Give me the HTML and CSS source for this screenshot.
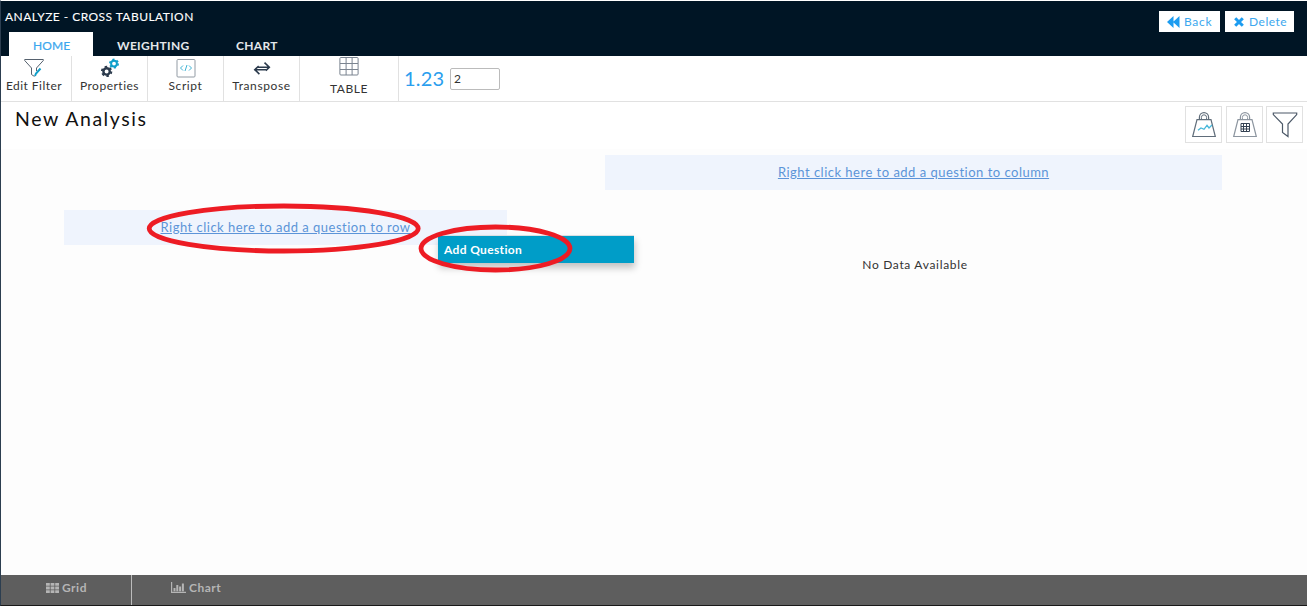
FILE: index.html
```html
<!DOCTYPE html>
<html lang="en">
<head>
<meta charset="utf-8">
<title>Analyze - Cross Tabulation</title>
<link rel="stylesheet" href="styles.css">
</head>
<body>
<div class="app">
  <header class="header">
    <div class="header-left">
      <div class="crumb"><span>ANALYZE - CROSS TABULATION</span></div>
      <nav class="tabs">
        <a class="tab active"><span>HOME</span></a>
        <a class="tab weighting"><span>WEIGHTING</span></a>
        <a class="tab chart"><span>CHART</span></a>
      </nav>
    </div>
    <div class="actions">
      <button class="btn back"><svg width="13" height="12" viewBox="0 0 13 12"><path fill="#1c9cf0" d="M6.5 0v12L0 6zM12.5 0v12L6 6z"/></svg><span>Back</span></button>
      <button class="btn delete"><svg width="10" height="10" viewBox="0 0 10 10"><path stroke="#1c9cf0" stroke-width="3" d="M1.2 1.2l7.6 7.6M8.8 1.2L1.2 8.8"/></svg><span>Delete</span></button>
    </div>
  </header>

  <div class="toolbar">
    <div class="tool filter">
      <svg width="20" height="20" viewBox="0 0 20 20" fill="none"><path stroke="#56616e" d="M.7 1.5h18.6v1L12.5 10v3M.7 1.5v1L7.5 10v6.5l3 2"/><path stroke="#109fca" stroke-width="2" d="M11 18l1-2.5 4.5-5"/></svg>
      <span>Edit Filter</span>
    </div>
    <div class="tool properties">
      <svg width="20" height="20" viewBox="0 0 20 20" fill="none"><circle cx="6.6" cy="13.4" r="3.2" stroke="#2b3a4c" stroke-width="2.4"/><circle cx="6.6" cy="13.4" r="4.8" stroke="#2b3a4c" stroke-width="1.8" stroke-dasharray="2.5 2.53"/><circle cx="14" cy="5.6" r="2.9" stroke="#109fca" stroke-width="2"/><circle cx="14" cy="5.6" r="4.2" stroke="#109fca" stroke-width="1.6" stroke-dasharray="2.2 2.2"/></svg>
      <span>Properties</span>
    </div>
    <div class="tool script">
      <svg width="20" height="20" viewBox="0 0 20 20" fill="none"><rect x="1" y="1.5" width="18" height="17.5" rx="1" stroke="#929ba4"/><path stroke="#3eb3d5" d="M7 7.5L4.5 10 7 12.5M13 7.5l2.5 2.5L13 12.5M11 7l-2 6"/></svg>
      <span>Script</span>
    </div>
    <div class="tool transpose">
      <svg width="20" height="20" viewBox="0 0 20 20" fill="none" stroke="#2b3a4c" stroke-width="1.6"><path d="M6 9.2h11.5M12.5 4.7L17.3 9.2 13.8 12.6M14 11.7H2.5M6.7 8.2L2.8 11.7 7.4 16.1"/></svg>
      <span>Transpose</span>
    </div>
    <div class="tool table">
      <svg width="20" height="20" viewBox="0 0 20 20" fill="none" stroke="#7b8490"><rect x=".9" y="1.5" width="18.2" height="17.5" rx="1"/><path d="M7.1 1v18M13.1 1v18M1 7.5h18M1 13.5h18"/></svg>
      <span>TABLE</span>
    </div>
    <div class="decimals"><label for="places">1.23</label><input id="places" value="2"></div>
  </div>

  <section class="titlebar">
    <h1><span>New Analysis</span></h1>
    <div class="icon-buttons">
      <button><svg width="26" height="28" viewBox="0 0 26 28" fill="none" stroke="#606d7a"><path stroke-width="1.2" d="M6 8.6h14l4.3 16.9H1.7zM8.4 8.4V6.2a4.6 4.6 0 0 1 9.2 0v2.2"/><path d="M10.4 8.4V6.4a2.6 2.6 0 0 1 5.2 0v2"/><path stroke="#47b8da" stroke-width="1.3" d="M7 19.3l3-2.3 3 1.3 3-4 2 2.7 3-3"/></svg></button>
      <button><svg width="26" height="28" viewBox="0 0 26 28" fill="none" stroke="#8c959f"><path stroke-width="1.2" d="M6 8.6h14l4.3 16.9H1.7zM8.4 8.4V6.2a4.6 4.6 0 0 1 9.2 0v2.2"/><path d="M10.4 8.4V6.4a2.6 2.6 0 0 1 5.2 0v2"/><path stroke="#344253" d="M9 12.5h8.5v8H9zM11.5 12.5v8M14.5 12.5v8M9 15.5h8.5M9 18h8.5"/></svg></button>
      <button><svg width="26" height="28" viewBox="0 0 26 28" fill="none"><path stroke="#4c5968" stroke-width="1.2" d="M1.3 2h23.4v1.6L16 13v12.5l-5.5-4V13L1.3 3.6z"/></svg></button>
    </div>
  </section>

  <main class="canvas">
    <div class="side rows">
      <div class="drop"><a>Right click here to add a question to row</a></div>
    </div>
    <div class="side columns">
      <div class="drop"><a>Right click here to add a question to column</a></div>
      <p class="empty"><span>No Data Available</span></p>
    </div>
    <div class="menu"><span>Add Question</span></div>
    <svg class="marks" width="440" height="80" viewBox="0 0 440 80" fill="none" stroke="#ed1c24" stroke-width="4.8"><ellipse cx="144.7" cy="33.5" rx="134.5" ry="22.5"/><ellipse cx="356.5" cy="53.5" rx="74.5" ry="21.5"/></svg>
  </main>

  <footer class="footer">
    <a class="view grid"><svg width="13" height="10" viewBox="0 0 13 10" fill="#b5b5b5"><path d="M0 0h3.8v2.8H0zM4.6 0h3.8v2.8H4.6zM9.2 0H13v2.8H9.2zM0 3.6h3.8v2.8H0zM4.6 3.6h3.8v2.8H4.6zM9.2 3.6H13v2.8H9.2zM0 7.2h3.8V10H0zM4.6 7.2h3.8V10H4.6zM9.2 7.2H13V10H9.2z"/></svg><span>Grid</span></a>
    <a class="view bars"><svg width="15" height="11" viewBox="0 0 15 11" fill="#b5b5b5"><path d="M0 0h1.2v9.8H15V11H0zM2.5 6h2v3.2h-2zM5.3 3h2v6.2h-2zM8.1 4.5h2v4.7h-2zM10.9 1.5h2v7.7h-2z"/></svg><span>Chart</span></a>
  </footer>
</div>
</body>
</html>
```
FILE: styles.css
```css
* { box-sizing: border-box; }
body { margin: 0; font-family: Lato, "Open Sans", sans-serif; font-size: 12px; color: #333; background: #fff; }
button { font-family: inherit; padding: 0; border-radius: 0; }
svg { display: block; flex: none; }
.app { height: 606px; display: flex; flex-direction: column; border-left: 1px solid #2c3e50; border-top: 1px solid #fff; border-bottom: 1px solid #191919; overflow: hidden; }

.header { height: 55px; background: #001525; display: flex; justify-content: space-between; color: #fff; }
.crumb { height: 31px; padding-left: 4px; line-height: 31px; font-size: 12px; letter-spacing: .45px; -webkit-text-stroke: .1px #fff; }
.tabs { display: flex; padding-left: 8px; }
.tab { height: 24px; line-height: 27px; font-size: 12px; font-weight: 700; letter-spacing: .3px; color: #e4e7ea; }
.tab.active { width: 84px; padding-left: 24px; background: #fff; color: #3ba7ee; font-weight: 400; letter-spacing: .1px; -webkit-text-stroke: .2px #3ba7ee; }
.weighting { width: 119px; padding-left: 24px; }
.chart { padding-left: 24px; }
.actions { display: flex; gap: 5px; padding: 10px 13px 0 0; }
.btn { height: 21px; border: 0; background: #fff; color: #3ba7ee; display: flex; align-items: center; font-size: 12px; letter-spacing: .5px; }
.back { width: 61px; padding-left: 8px; gap: 4px; }
.back span { letter-spacing: .7px; }
.delete { width: 69px; padding-left: 9px; gap: 5px; }

.toolbar { height: 46px; flex: none; display: flex; border-bottom: 1px solid #e1e1e1; background: #fff; }
.tool { border-right: 1px solid #e1e1e1; display: flex; flex-direction: column; align-items: center; padding-top: 2px; letter-spacing: .6px; line-height: 15px; white-space: nowrap; }
.filter { width: 71px; padding-right: 4px; letter-spacing: .45px; }
.properties { letter-spacing: .5px; }
.properties, .script, .transpose { width: 76px; }
.table { width: 99px; padding-top: 0; }
.table span { padding-top: 5px; }
.decimals { display: flex; align-items: flex-start; padding: 12px 0 0 5px; }
.decimals label { width: 46px; font-size: 20px; line-height: 21px; letter-spacing: .2px; color: #2b9eee; }
.decimals input { width: 50px; height: 22px; padding: 0 3px 2px; border: 1px solid #bbb; border-radius: 2px; font: 12px Lato, sans-serif; color: #333; }

.titlebar { height: 47px; flex: none; display: flex; justify-content: space-between; padding: 4px 4px 0 14px; }
h1 { margin: 0; font-size: 19.5px; line-height: 26px; font-weight: 400; letter-spacing: 1.55px; color: #111; }
.icon-buttons { display: flex; gap: 4px; }
.icon-buttons button { width: 37px; height: 37px; display: grid; place-items: center; background: #fff; border: 1px solid #e1e1e1; }
.icon-buttons button:last-child { margin-left: -1px; }

.canvas { position: relative; flex: 1; display: flex; background: #fdfdfd; }
.rows { padding: 61px 98px 0 63px; }
.columns { padding-top: 6px; }
.drop { height: 35px; background: #eff4fd; text-align: center; line-height: 35px; font-size: 13px; }
.drop a { color: #5c94d8; text-decoration: underline; letter-spacing: .49px; }
.rows .drop { width: 443px; }
.columns .drop { width: 617px; }
.empty { margin: 67px 0 0; padding-left: 3px; text-align: center; line-height: 15px; letter-spacing: .68px; }
.menu { position: absolute; left: 437px; top: 86px; width: 196px; height: 28px; padding-left: 6px; border-top: 1px solid #d8dfe2; background: #009dc8; color: #fff; font-weight: 700; line-height: 27px; letter-spacing: .35px; box-shadow: 1px 5px 7px rgba(0,0,0,.23); }
.marks { position: absolute; left: 138px; top: 46px; }

.footer { height: 30px; flex: none; display: flex; background: #5e5e5e; color: #b5b5b5; font-weight: 700; }
.view { width: 131px; display: flex; align-items: center; gap: 3px; padding-bottom: 5px; letter-spacing: .5px; }
.grid { padding-left: 45px; border-right: 1px solid #bbb; }
.bars { padding-left: 39px; }
```
